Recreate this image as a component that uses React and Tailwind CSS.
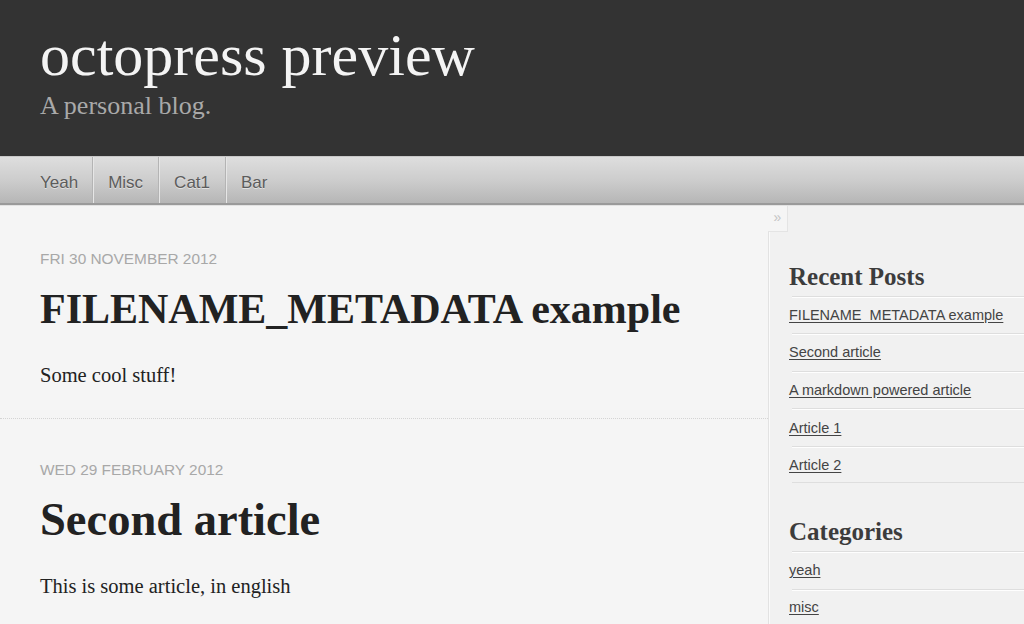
import React from "react";

const serif = { fontFamily: '"Liberation Serif", "Times New Roman", serif' };
const sans = { fontFamily: '"Liberation Sans", Arial, sans-serif' };

function Post({ date, title, titleSize, body, first }) {
  return (
    <article
      className={
        "pl-10 pb-[29px] " +
        (first ? "pt-[43px]" : "pt-[41px] border-t border-dotted border-[#d4d4d4]")
      }
    >
      <div className="text-[15.4px] leading-[20px] text-[#a8a8a8] uppercase" style={sans}>
        {date}
      </div>
      <h1
        className="mt-[15px] leading-[50px] font-bold text-[#222]"
        style={{ ...serif, fontSize: titleSize }}
      >
        {title}
      </h1>
      <p className="mt-[27px] text-[20.5px] leading-[28px] text-[#222]" style={serif}>
        {body}
      </p>
    </article>
  );
}

function SideSection({ title, items, className }) {
  return (
    <section className={className}>
      <h2 className="text-[25px] leading-[30px] font-bold text-[#3c3c3c] mb-[3.5px]" style={serif}>
        {title}
      </h2>
      <ul>
        {items.map((t, i) => (
          <li
            key={t}
            className={
              "ml-[3px] h-[37.6px] flex items-center border-t border-[#dedede] shadow-[inset_0_1px_0_rgba(255,255,255,0.9)] " +
              (i === items.length - 1 ? "border-b" : "")
            }
          >
            <a
              href="#"
              className="-ml-[3px] text-[14.5px] leading-[20px] text-[#444] underline underline-offset-2"
              style={sans}
            >
              {t}
            </a>
          </li>
        ))}
      </ul>
    </section>
  );
}

export default function App() {
  const nav = ["Yeah", "Misc", "Cat1", "Bar"];
  return (
    <div className="w-[1024px] h-[624px] overflow-hidden bg-[#f5f5f5] flex flex-col">
      <header className="h-[156px] shrink-0 bg-[#333333] pt-[25px] pl-10">
        <h1 className="text-[60px] leading-[60px] text-[#f4f4f4]" style={serif}>
          octopress preview
        </h1>
        <p className="mt-[8px] text-[26px] leading-[26px] text-[#a9a9a9]" style={serif}>
          A personal blog.
        </p>
      </header>
      <nav className="h-[49px] shrink-0 border-t border-[#c8c8c8] border-b-2 border-b-[#9a9a9a] bg-gradient-to-b from-[#dedede] via-[#cdcdcd] to-[#b6b6b6] flex items-stretch pl-10">
        {nav.map((n, i) => (
          <div
            key={n}
            className={
              "flex items-center pt-[5px] " +
              (i === 0 ? "pr-[14px]" : "pl-[15px] pr-[15px] border-l border-l-[#b4b4b4] shadow-[inset_1px_0_0_#e6e6e6]")
            }
          >
            <span
              className="text-[17px] text-[#5c5c5c] [text-shadow:0_1px_0_rgba(255,255,255,0.5)]"
              style={sans}
            >
              {n}
            </span>
          </div>
        ))}
      </nav>
      <div className="flex flex-1 border-t border-[#e2e2e2]">
        <main className="w-[768px] shrink-0">
          <Post
            first
            date="Fri 30 November 2012"
            title="FILENAME_METADATA example"
            titleSize="42px"
            body="Some cool stuff!"
          />
          <Post
            date="Wed 29 February 2012"
            title="Second article"
            titleSize="46.5px"
            body="This is some article, in english"
          />
        </main>
        <div className="flex-1 flex flex-col">
          <div className="h-[26px] flex shrink-0">
            <div className="w-[20px] border-r border-b border-[#e4e4e4] flex items-center justify-center text-[14px] text-[#c4c4c4] pb-[2px]" style={sans}>
              »
            </div>
            <div className="flex-1 bg-[#f1f1f1]" />
          </div>
          <aside className="flex-1 bg-[#f1f1f1] border-l border-[#e2e2e2] shadow-[inset_1px_0_0_#fafafa] pl-[20px] pt-[30px]">
            <SideSection
              title="Recent Posts"
              items={[
                "FILENAME_METADATA example",
                "Second article",
                "A markdown powered article",
                "Article 1",
                "Article 2",
              ]}
            />
            <SideSection className="mt-[34px]" title="Categories" items={["yeah", "misc"]} />
          </aside>
        </div>
      </div>
    </div>
  );
}
